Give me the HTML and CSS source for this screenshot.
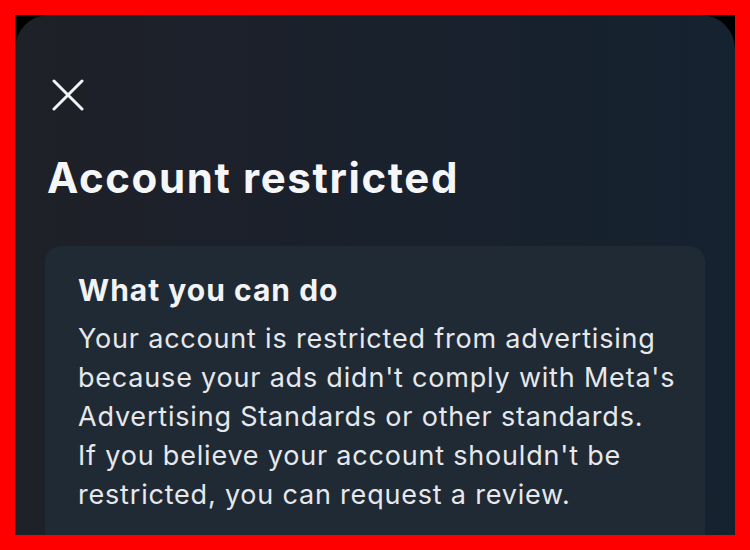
FILE: index.html
```html
<!DOCTYPE html>
<html lang="en">
<head>
<meta charset="utf-8">
<title>Account restricted</title>
<link rel="stylesheet" href="styles.css">
</head>
<body>
<div class="frame">
  <div class="screen">
    <div class="panel">
      <button class="close" aria-label="Close">
        <svg width="32" height="32" viewBox="0 0 32 32" aria-hidden="true">
          <path d="M2 2 L30 30 M30 2 L2 30" stroke="#f2f3f5" stroke-width="3" stroke-linecap="round" fill="none"/>
        </svg>
      </button>
      <h1 class="title">Account restricted</h1>
      <section class="card">
        <h2 class="card-title">What you can do</h2>
        <p class="card-text">Your account is restricted from advertising because your ads didn't comply with Meta's Advertising Standards or other standards.<br>If you believe your account shouldn't be restricted, you can request a review.</p>
      </section>
    </div>
  </div>
</div>
</body>
</html>
```
FILE: styles.css
```css
* { box-sizing: border-box; }
html, body { margin: 0; padding: 0; }
body {
  font-family: Inter, "Noto Sans", sans-serif;
  background: #ff0000;
}
.frame {
  width: 750px;
  height: 550px;
  background: #ff0000;
  padding: 15px;
}
.screen {
  width: 720px;
  height: 520px;
  background: #000;
  overflow: hidden;
}
.panel {
  height: 100%;
  border-radius: 34px 34px 0 0;
  background: linear-gradient(90deg, #1f2028 0%, #1a212c 45%, #15222f 100%);
  padding: 0 30px;
  display: flex;
  flex-direction: column;
}
.close {
  margin: 63px 0 0 6px;
  width: 34px;
  height: 34px;
  padding: 1px;
  border: 0;
  background: none;
  display: flex;
  flex-shrink: 0;
}
.title {
  margin: 41px 0 0 2px;
  font-size: 42px;
  line-height: 50px;
  font-weight: 700;
  color: #f5f6f8;
  letter-spacing: 1.6px;
}
.card {
  margin-top: 43px;
  flex: 1;
  background: #1f2a34;
  border-radius: 16px 16px 0 0;
  padding: 25px 20px 0 33px;
}
.card-title {
  margin: 0;
  font-size: 30px;
  line-height: 38px;
  font-weight: 700;
  color: #f2f3f5;
  letter-spacing: 1px;
}
.card-text {
  margin: 10px 0 0;
  font-size: 27px;
  line-height: 39px;
  font-weight: 400;
  color: #e6e8ec;
  letter-spacing: 0.8px;
}
```
